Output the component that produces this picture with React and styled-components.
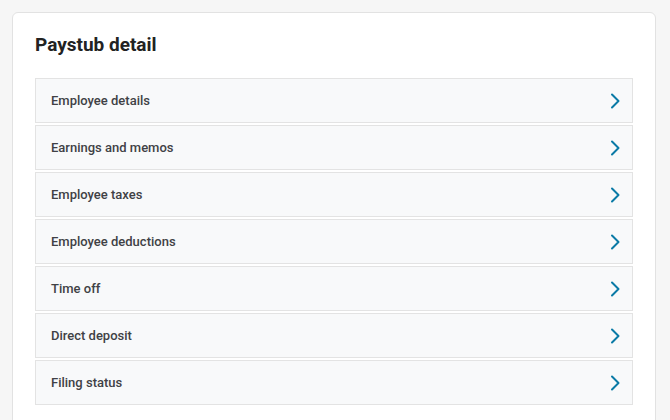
import styled, { createGlobalStyle } from 'styled-components';

const GlobalStyle = createGlobalStyle`
  body {
    margin: 0;
    background: #f6f6f6;
    font-family: Roboto, "Liberation Sans", sans-serif;
  }
`;

const sections = [
  'Employee details',
  'Earnings and memos',
  'Employee taxes',
  'Employee deductions',
  'Time off',
  'Direct deposit',
  'Filing status',
];

const Chevron = () => (
  <svg width="12" height="16" viewBox="0 0 12 16" fill="none">
    <path d="M3 1.5 L9.5 8 L3 14.5" stroke="#0a7aa6" strokeWidth="2" strokeLinecap="round" strokeLinejoin="round" />
  </svg>
);

const App = () => {
  return (
    <>
      <GlobalStyle />
      <Page>
        <Card>
          <Title>Paystub detail</Title>
          <List>
            {sections.map((s) => (
              <Row key={s}>
                <Label>{s}</Label>
                <Chevron />
              </Row>
            ))}
          </List>
        </Card>
      </Page>
    </>
  );
};
export default App;

const Page = styled.div`
  padding: 12px 14px 0 12px;
  height: 420px;
  box-sizing: border-box;
  overflow: hidden;
`;

const Card = styled.div`
  background: #fff;
  border: 1px solid #e2e2e2;
  border-radius: 6px;
  padding: 21px 22px 30px 22px;
`;

const Title = styled.h2`
  margin: 0 0 22px 0;
  font-size: 19px;
  line-height: 22px;
  font-weight: 700;
  color: #222;
`;

const List = styled.div`
  display: flex;
  flex-direction: column;
  gap: 2px;
`;

const Row = styled.div`
  display: flex;
  align-items: center;
  justify-content: space-between;
  height: 45px;
  box-sizing: border-box;
  padding: 0 11px 0 15px;
  background: #f8f9fa;
  border: 1px solid #e3e3e3;
`;

const Label = styled.span`
  font-size: 13px;
  font-weight: 500;
  color: #404145;
`;
